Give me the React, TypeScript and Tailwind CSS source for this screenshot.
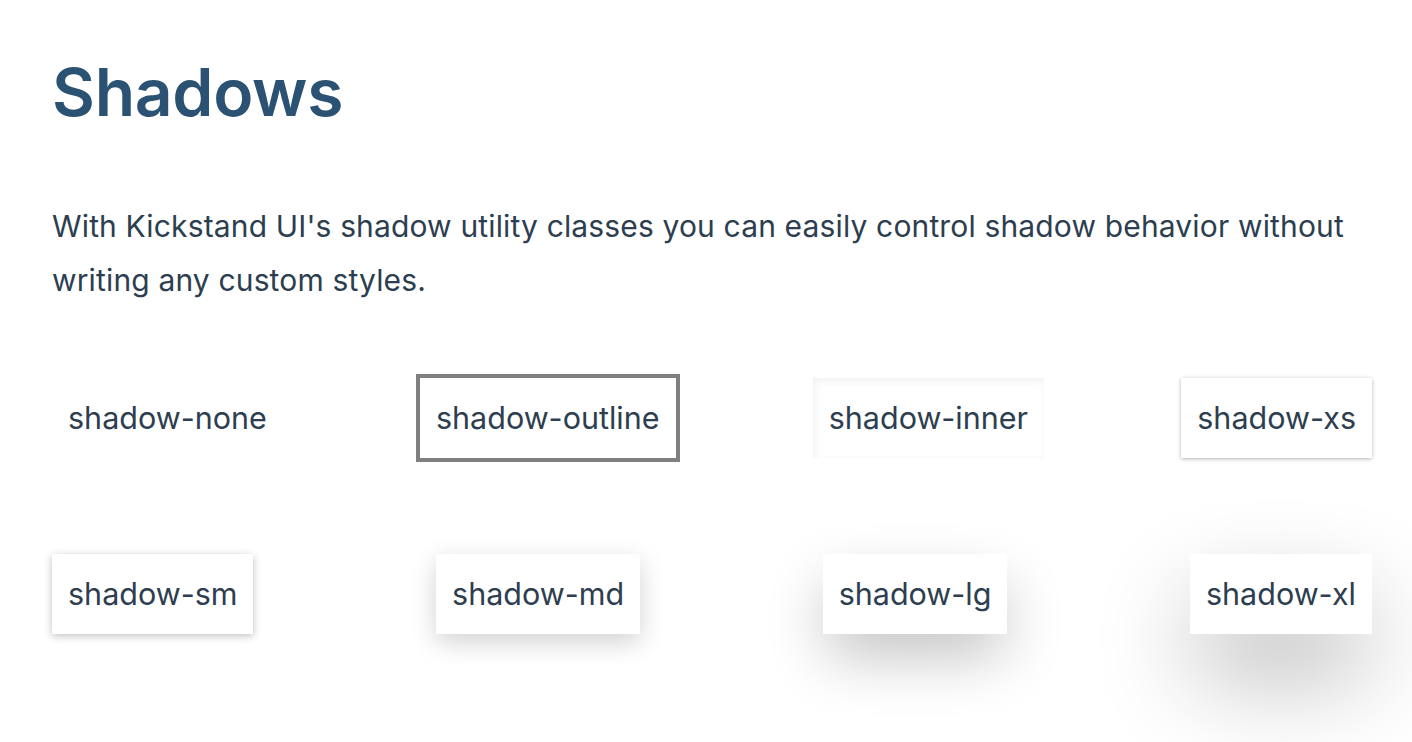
import React from "react";

const font = { fontFamily: "Inter, 'Noto Sans', sans-serif" };

export default function App() {
  return (
    <div className="min-h-screen bg-white pl-[52px] pr-[40px] pt-[52px] text-[#2c3e50]" style={font}>
      <h1 className="text-[66px] font-semibold leading-[80px] text-[#2b5273] tracking-[-0.3px]">Shadows</h1>
      <p className="mt-[67px] text-[30px] leading-[54px] tracking-[0.15px]">
        With Kickstand UI's shadow utility classes you can easily control shadow behavior without writing any custom styles.
      </p>
      <div className="mt-[71px] flex justify-between">
        <div className="px-4 py-4 text-[30.5px] leading-[48px]">shadow-none</div>
        <div className="px-4 py-4 text-[30.5px] leading-[48px] outline-4 outline-solid outline-[#808080]">shadow-outline</div>
        <div className="px-4 py-4 text-[30.5px] leading-[48px] shadow-[inset_2px_3px_8px_rgba(0,0,0,0.06)]">shadow-inner</div>
        <div className="px-4 py-4 text-[30.5px] leading-[48px] shadow-[0_1px_4px_rgba(0,0,0,0.3)]">shadow-xs</div>
      </div>
      <div className="mt-[96px] flex justify-between">
        <div className="px-4 py-4 text-[30.5px] leading-[48px] shadow-[0_2px_8px_rgba(0,0,0,0.25)]">shadow-sm</div>
        <div className="px-4 py-4 text-[30.5px] leading-[48px] shadow-[0_8px_26px_rgba(0,0,0,0.18)]">shadow-md</div>
        <div className="px-4 py-4 text-[30.5px] leading-[48px] shadow-[0_26px_60px_-4px_rgba(0,0,0,0.24)]">shadow-lg</div>
        <div className="px-4 py-4 text-[30.5px] leading-[48px] shadow-[0_44px_100px_-6px_rgba(0,0,0,0.32)]">shadow-xl</div>
      </div>
    </div>
  );
}
